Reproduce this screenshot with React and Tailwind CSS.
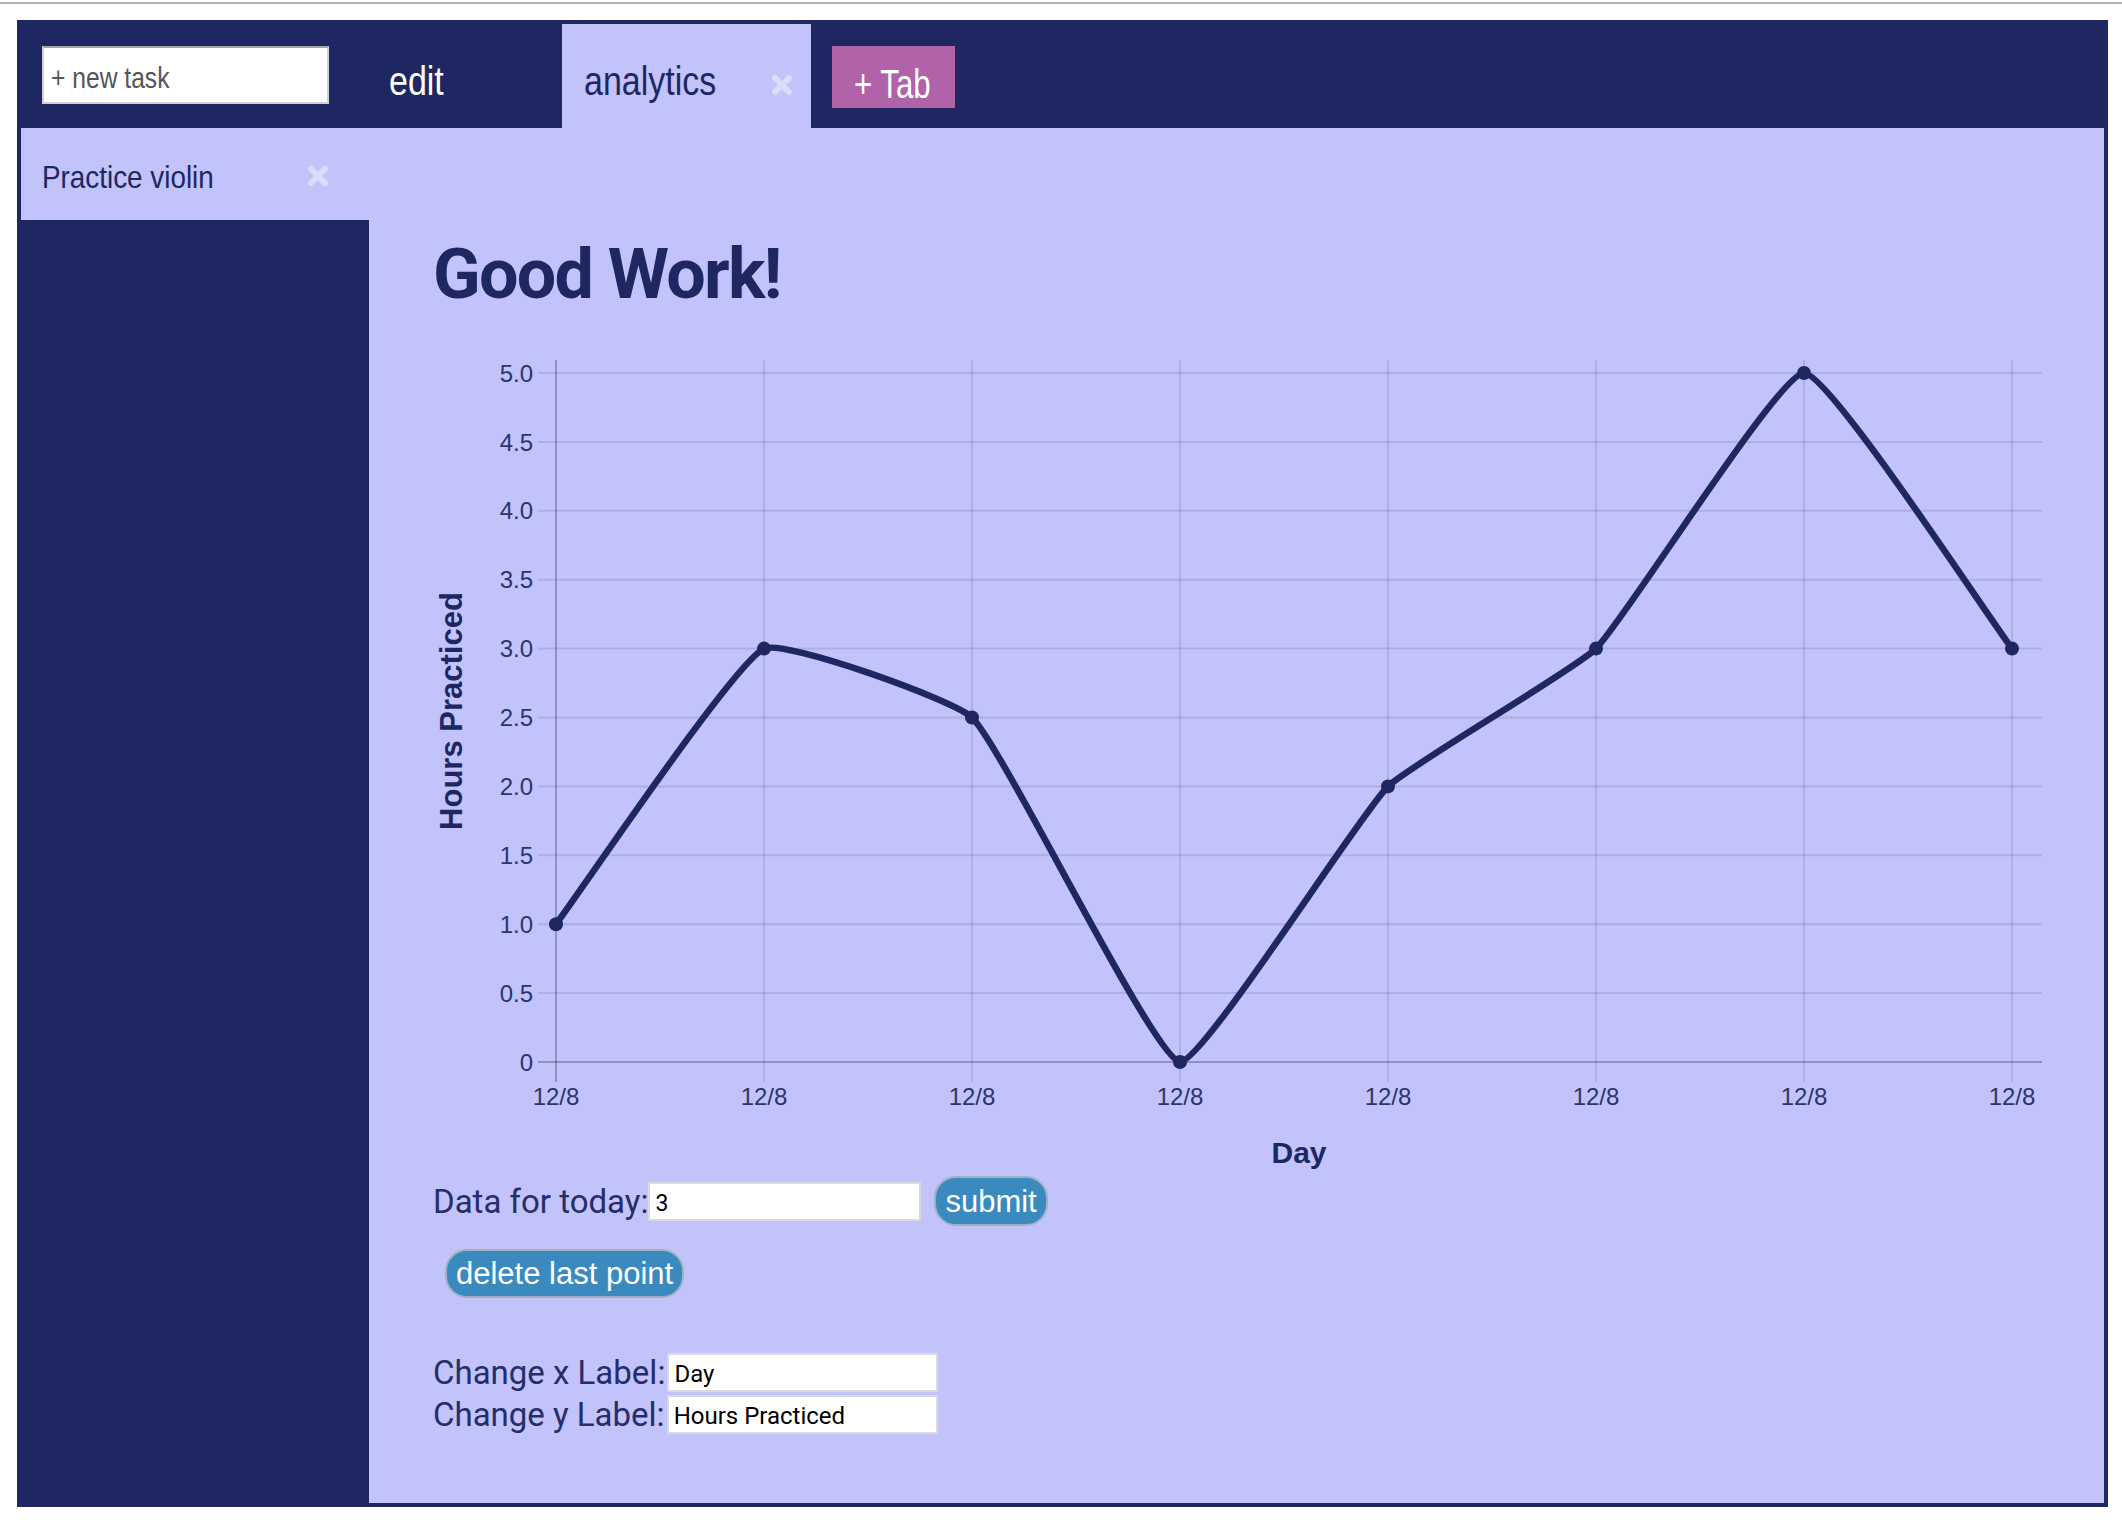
import React from "react";

const NAVY = "#1f2763";
const DATA = [1, 3, 2.5, 0, 2, 3, 5, 3];
const TICKS = [0, 0.5, 1, 1.5, 2, 2.5, 3, 3.5, 4, 4.5, 5];

// chart geometry, in page pixels (the svg viewBox uses page coordinates)
const X0 = 556;
const DX = 208;
const Y0 = 1062;
const PER = 137.8;
const TOP = 373;
const px = (i) => X0 + DX * i;
const py = (v) => Y0 - v * PER;

// narrow display face: Liberation Sans squeezed horizontally
const NARROW = "inline-block origin-left whitespace-nowrap font-['Liberation_Sans',Arial,sans-serif]";

function splinePath(points, t) {
  const clamp = (y) => Math.min(Y0, Math.max(TOP, y));
  const cps = points.map((p, i) => {
    const prev = points[i - 1] || p;
    const next = points[i + 1] || p;
    const d01 = Math.hypot(p.x - prev.x, p.y - prev.y);
    const d12 = Math.hypot(next.x - p.x, next.y - p.y);
    const sum = d01 + d12 || 1;
    const fa = (t * d01) / sum;
    const fb = (t * d12) / sum;
    return {
      inX: p.x - fa * (next.x - prev.x),
      inY: clamp(p.y - fa * (next.y - prev.y)),
      outX: p.x + fb * (next.x - prev.x),
      outY: clamp(p.y + fb * (next.y - prev.y)),
    };
  });
  let d = `M${points[0].x},${points[0].y}`;
  for (let i = 1; i < points.length; i++) {
    const a = cps[i - 1];
    const b = cps[i];
    d += ` C${a.outX},${a.outY} ${b.inX},${b.inY} ${points[i].x},${points[i].y}`;
  }
  return d;
}

function CloseIcon() {
  return (
    <svg width="22" height="22" viewBox="0 0 22 22" className="shrink-0">
      <path d="M4 4 L18 18 M18 4 L4 18" stroke="#dcdef9" strokeWidth="6" strokeLinecap="round" />
    </svg>
  );
}

function Chart() {
  const pts = DATA.map((v, i) => ({ x: px(i), y: py(v) }));
  const d = splinePath(pts, 0.12);
  return (
    <svg
      viewBox="433 330 1640 842"
      width="1640"
      height="842"
      className="block font-['Liberation_Sans',Arial,sans-serif]"
    >
      {TICKS.map((v) => (
        <line
          key={`h${v}`}
          x1={538}
          x2={2042}
          y1={py(v)}
          y2={py(v)}
          stroke={v === 0 ? "rgba(0,0,0,0.25)" : "rgba(0,0,0,0.1)"}
          strokeWidth="2"
        />
      ))}
      {DATA.map((_, i) => (
        <line
          key={`v${i}`}
          x1={px(i)}
          x2={px(i)}
          y1={360}
          y2={1082}
          stroke={i === 0 ? "rgba(0,0,0,0.25)" : "rgba(0,0,0,0.1)"}
          strokeWidth="2"
        />
      ))}
      {TICKS.map((v) => (
        <text key={`t${v}`} x={533} y={py(v) + 8.6} textAnchor="end" className="fill-[#2c3370] text-[24px]">
          {v === 0 ? "0" : v.toFixed(1)}
        </text>
      ))}
      {DATA.map((_, i) => (
        <text key={`x${i}`} x={px(i)} y={1105} textAnchor="middle" className="fill-[#2c3370] text-[24px]">
          12/8
        </text>
      ))}
      <text x={1299} y={1163} textAnchor="middle" className="fill-[#1f2763] text-[30px] font-bold">
        Day
      </text>
      <text
        x={462}
        y={711}
        textAnchor="middle"
        transform="rotate(-90 462 711)"
        className="fill-[#1f2763] text-[31px] font-bold"
      >
        Hours Practiced
      </text>
      <path d={d} fill="none" stroke={NAVY} strokeWidth="6.5" strokeLinejoin="round" />
      {pts.map((p, i) => (
        <circle key={`p${i}`} cx={p.x} cy={p.y} r="7" fill={NAVY} />
      ))}
    </svg>
  );
}

function Field({ label, value }) {
  return (
    <div className="flex h-[42px] items-center">
      <span className="text-[33px] leading-none text-[#262d68]">{label}</span>
      <input
        readOnly
        value={value}
        className="ml-[2px] h-[39px] w-[271px] border-2 border-[#d9d9de] bg-white pl-[5px] pt-[3px] text-[24px] text-black outline-none"
      />
    </div>
  );
}

export default function App() {
  return (
    <div className="min-h-screen bg-white font-['Roboto',sans-serif]">
      <div className="mt-[2px] h-[2px] bg-[#b4b4b4]" />

      <div className="ml-[17px] mt-[16px] w-[2091px] bg-[#1f2763] px-[4px] pb-[4px]">
        {/* top bar */}
        <div className="flex h-[108px] items-start">
          <div className="ml-[21px] mt-[26px] h-[58px] w-[287px] shrink-0 border-2 border-[#cfcfd4] border-t-[#a3a3a8] bg-white pl-[7px] pt-[16px]">
            <span className={`${NARROW} scale-x-[0.85] text-[29px] leading-none text-[#555]`}>+ new task</span>
          </div>
          <div className="ml-[38px] h-[104px] w-[195px] shrink-0 self-end pl-[22px] pt-[37px]">
            <span className={`${NARROW} scale-x-[0.85] text-[40px] leading-none text-white`}>edit</span>
          </div>
          <div className="flex h-[104px] w-[249px] shrink-0 items-start justify-between self-end bg-[#c1c3fa] pl-[22px] pr-[18px] pt-[37px]">
            <span className={`${NARROW} scale-x-[0.85] text-[40px] leading-none text-[#1f2763]`}>analytics</span>
            <span className="mt-[13px]">
              <CloseIcon />
            </span>
          </div>
          <button className="ml-[21px] mt-[26px] h-[62px] w-[123px] shrink-0 overflow-hidden bg-[#b063a8] pl-[22px] pt-[15px] text-left">
            <span className={`${NARROW} scale-x-[0.78] text-[40px] leading-none text-white`}>+ Tab</span>
          </button>
        </div>

        {/* body */}
        <div className="flex h-[1375px]">
          <aside className="w-[348px] shrink-0 bg-[#1f2763]">
            <div className="flex h-[92px] items-start justify-between bg-[#c1c3fa] pl-[21px] pr-[40px] pt-[33px]">
              <span className={`${NARROW} scale-x-[0.87] text-[32px] leading-none text-[#1f2763]`}>
                Practice violin
              </span>
              <span className="mt-[4px]">
                <CloseIcon />
              </span>
            </div>
          </aside>

          <main className="flex-1 bg-[#c1c3fa] pl-[64px] pt-[111px]">
            <h1 className="h-[70px] text-[70px] font-bold leading-none tracking-[-0.025em] text-[#1f2763]">
              Good Work!
            </h1>

            <div className="mt-[21px]">
              <Chart />
            </div>

            <div className="mt-[4px] flex h-[50px] items-center">
              <span className="text-[33px] leading-none text-[#262d68]">Data for today:</span>
              <input
                readOnly
                value="3"
                className="h-[39px] w-[273px] border-2 border-[#d9d9de] bg-white pl-[5px] pt-[4px] text-[23px] text-black outline-none"
              />
              <button className="ml-[13px] h-[50px] rounded-[22px] border-2 border-[#9fb3bf] bg-[#3a8abf] px-[9px] font-['Liberation_Sans',Arial,sans-serif] text-[31px] leading-none text-white">
                submit
              </button>
            </div>

            <button className="ml-[12px] mt-[23px] h-[49px] rounded-[22px] border-2 border-[#9fb3bf] bg-[#3a8abf] px-[9px] font-['Liberation_Sans',Arial,sans-serif] text-[31px] leading-none text-white">
              delete last point
            </button>

            <div className="mt-[53px]">
              <Field label="Change x Label:" value="Day" />
              <Field label="Change y Label:" value="Hours Practiced" />
            </div>
          </main>
        </div>
      </div>
    </div>
  );
}
